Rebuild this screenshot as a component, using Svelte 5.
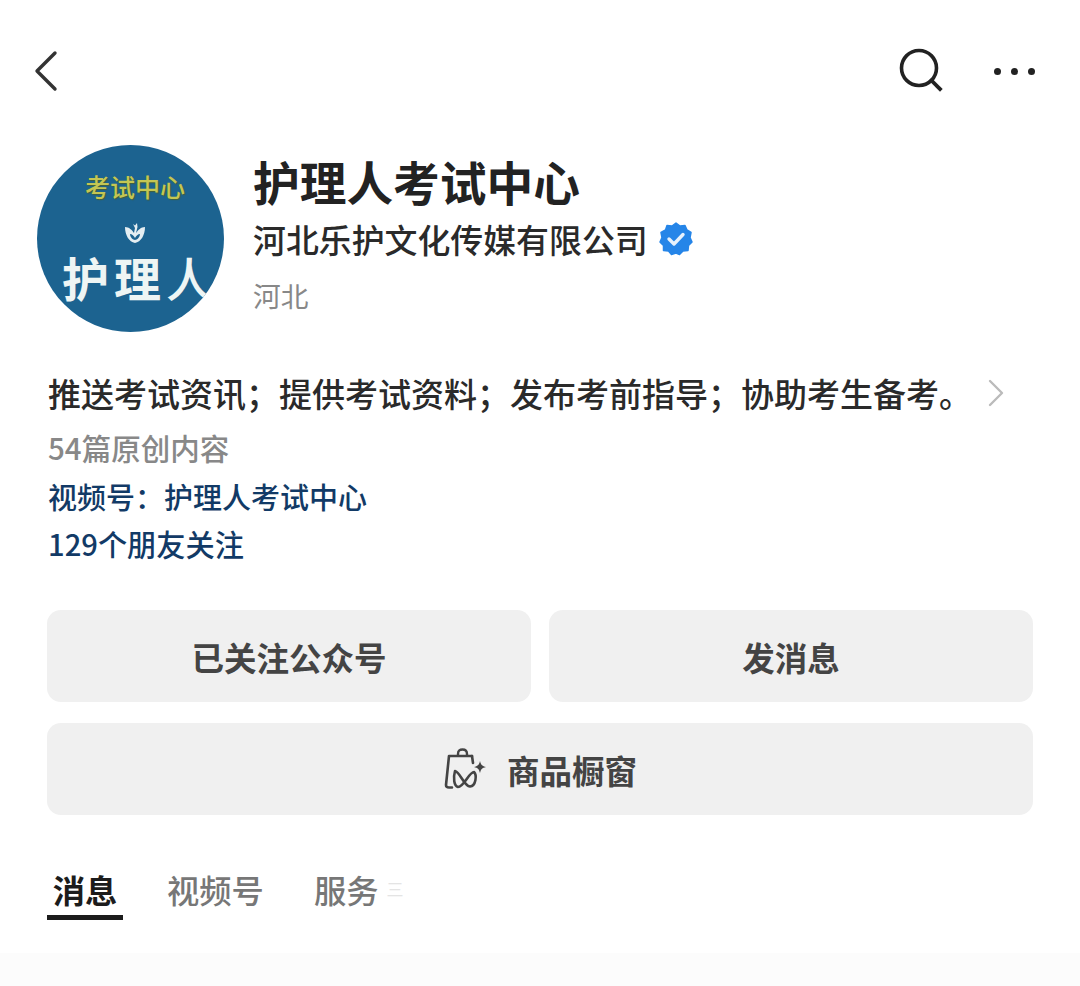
<script lang="ts">
  const tabs = [
    { label: '消息', active: true },
    { label: '视频号', active: false },
    { label: '服务', active: false }
  ];
</script>

<section class="page">
  <header class="nav">
    <svg class="back" width="26" height="42" viewBox="0 0 26 42" fill="none">
      <path d="M22 3 L4 21 L22 39" stroke="#333" stroke-width="3.4" stroke-linecap="round" stroke-linejoin="round" />
    </svg>
    <div class="nav-right">
      <svg width="46" height="46" viewBox="0 0 46 46" fill="none">
        <circle cx="21" cy="20" r="17.5" stroke="#222" stroke-width="3.6" />
        <path d="M33.5 32.5 L42 41" stroke="#222" stroke-width="3.8" stroke-linecap="square" />
      </svg>
      <div class="dots"><i></i><i></i><i></i></div>
    </div>
  </header>

  <div class="profile">
    <div class="avatar">
      <span class="av-top">考试中心</span>
      <svg class="av-mark" width="22" height="22" viewBox="0 0 22 22">
        <path d="M1 5 C5 5 8 8 10 11 L11 6 L9 2 L11 3.5 L13 1 L13.5 5 L12 11 C14 8 17 5 21 5 C21 13 17 20 11 21 C5 20 1 13 1 5 Z" fill="#e4eef2" />
        <path d="M6 12 C8 12 10 14 11 16 C12 14 14 12 16 12 C16 15 13 18 11 18 C9 18 6 15 6 12 Z" fill="#1c6390" />
      </svg>
      <span class="av-main">护理<em>人</em></span>
    </div>
    <div class="names">
      <h1>护理人考试中心</h1>
      <div class="company">
        河北乐护文化传媒有限公司
        <svg width="34" height="34" viewBox="0 0 34 34">
          <path d="M17 1 L21 4 L26 3.5 L28 8 L32 10.5 L31 15.5 L33 20 L29.5 23.5 L29 28.5 L24 29 L20.5 32.5 L17 31 L12.5 32.5 L9.5 29 L4.5 28.5 L4.5 23.5 L1 20 L3 15.5 L2 10.5 L6.5 8 L8 3.5 L13 4 Z" fill="#2585e8" stroke="#2585e8" stroke-width="1.5" stroke-linejoin="round" />
          <path d="M10 17 L15 22 L24 12.5" fill="none" stroke="#e6f1fc" stroke-width="3.4" stroke-linecap="round" stroke-linejoin="round" />
        </svg>
      </div>
      <div class="region">河北</div>
    </div>
  </div>

  <div class="intro">
    <p class="desc">
      <span>推送考试资讯；提供考试资料；发布考前指导；协助考生备考。</span>
      <svg width="16" height="28" viewBox="0 0 16 28" fill="none">
        <path d="M2 2 L14 14 L2 26" stroke="#bbb" stroke-width="2.4" stroke-linecap="round" stroke-linejoin="round" />
      </svg>
    </p>
    <p class="count">54篇原创内容</p>
    <p class="link channel">视频号：护理人考试中心</p>
    <p class="link friends">129个朋友关注</p>
  </div>

  <div class="actions">
    <button>已关注公众号</button>
    <button>发消息</button>
    <button class="wide">
      <svg width="44" height="42" viewBox="0 0 44 42" fill="none">
        <path d="M15 8 V6 C15 2.5 17 1.5 19.5 1.5 C22 1.5 24 2.5 24 6 V8" stroke="#444" stroke-width="2.4" />
        <path d="M29 8 H6 L3 37 C3 39 4 39.5 6 39.5 H9" stroke="#444" stroke-width="2.6" stroke-linecap="round" stroke-linejoin="round" />
        <path d="M29 8 L30 15" stroke="#444" stroke-width="2.6" stroke-linecap="round" />
        <path d="M12 23 C17 24 21 38 27 38.5 C33 38 34 27 31 24 C26 24 21 39 15 39 C11 38 10 30 12 23 Z" stroke="#444" stroke-width="2.6" stroke-linejoin="round" />
        <path d="M37 13 C38 17 39 18 43 19 C39 20 38 21 37 25 C36 21 35 20 31 19 C35 18 36 17 37 13 Z" fill="#444" />
      </svg>
      商品橱窗
    </button>
  </div>

  <nav class="tabs">
    {#each tabs as tab}
      <span class="tab" class:active={tab.active}>{tab.label}</span>
    {/each}
    <span class="more">三</span>
  </nav>

  <div class="foot"></div>
</section>

<style>
  :global(body) {
    background: #fff;
    font-family: "Noto Sans CJK SC", "Noto Sans", sans-serif;
  }

  .page {
    width: 1080px;
    height: 986px;
    overflow: hidden;
    display: flex;
    flex-direction: column;
    color: #222;
  }

  .nav {
    display: flex;
    justify-content: space-between;
    align-items: center;
    height: 46px;
    margin-top: 48px;
    padding: 0 45px 0 33px;
  }

  .nav-right {
    display: flex;
    align-items: center;
    gap: 50px;
  }

  .dots {
    display: flex;
    gap: 10px;
  }

  .dots i {
    width: 7px;
    height: 7px;
    border-radius: 50%;
    background: #222;
  }

  .profile {
    display: flex;
    gap: 29px;
    margin-top: 51px;
    padding-left: 37px;
  }

  .avatar {
    width: 187px;
    height: 187px;
    flex: none;
    border-radius: 50%;
    overflow: hidden;
    background: #1c6390;
    display: flex;
    flex-direction: column;
    align-items: flex-start;
  }

  .av-top {
    margin: 23px 0 0 48px;
    font-size: 25px;
    line-height: 36px;
    font-weight: 500;
    color: #c4c653;
    text-shadow: 1px 1px 1px #44603a;
    white-space: nowrap;
  }

  .av-mark {
    margin: 18px 0 0 87px;
  }

  .av-main {
    margin: 2px 0 0 25px;
    font-size: 47px;
    line-height: 62px;
    font-weight: 700;
    color: #eef5f4;
    white-space: nowrap;
    letter-spacing: 5px;
  }

  .av-main em {
    font-style: normal;
    font-weight: 500;
    letter-spacing: 0;
  }

  .names {
    padding-top: 8px;
  }

  h1 {
    margin: 0;
    font-size: 46.7px;
    line-height: 56px;
    font-weight: 700;
    color: #222;
    white-space: nowrap;
  }

  .company {
    display: flex;
    align-items: center;
    gap: 11px;
    margin-top: 3px;
    font-size: 32.9px;
    line-height: 54px;
    font-weight: 500;
    color: #2a2a2a;
    white-space: nowrap;
  }

  .region {
    margin-top: 6px;
    font-size: 27.7px;
    line-height: 46px;
    color: #888;
  }

  .intro {
    padding-left: 48px;
    margin-top: 35px;
  }

  .intro p {
    margin: 0;
    white-space: nowrap;
  }

  .desc {
    display: flex;
    align-items: center;
    gap: 16px;
    font-size: 33px;
    line-height: 52px;
    font-weight: 500;
    color: #2a2a2a;
  }

  .count {
    margin-top: 5px !important;
    font-size: 29.5px;
    line-height: 46px;
    font-weight: 500;
    color: #888;
  }

  .link {
    font-size: 29px;
    line-height: 48px;
    font-weight: 500;
    color: #123a66;
  }

  .channel {
    margin-top: 2px !important;
  }

  .friends {
    margin-top: -1px !important;
    font-size: 29.2px;
  }

  .actions {
    display: grid;
    grid-template-columns: 484px 484px;
    gap: 21px 18px;
    margin-top: 43px;
    padding-left: 47px;
  }

  button {
    height: 92px;
    border: none;
    border-radius: 14px;
    background: #f0f0f0;
    font-family: inherit;
    font-size: 32.5px;
    font-weight: 700;
    color: #444;
    display: flex;
    align-items: center;
    justify-content: center;
    gap: 20px;
    padding: 0;
  }

  .wide {
    grid-column: 1 / 3;
  }

  .tabs {
    display: flex;
    align-items: flex-start;
    gap: 44px;
    margin-top: 50px;
    padding-left: 47px;
  }

  .tab {
    font-size: 32.3px;
    line-height: 48px;
    font-weight: 500;
    color: #777;
    white-space: nowrap;
  }

  .tab:nth-child(3) {
    margin-left: 6px;
  }

  .tab.active {
    width: 76px;
    text-align: center;
    font-weight: 700;
    color: #1c1c1c;
    padding-bottom: 2px;
    border-bottom: 5px solid #1c1c1c;
  }

  .more {
    margin-left: -36px;
    font-size: 17px;
    line-height: 48px;
    color: #e4e4e4;
  }

  .foot {
    flex: 1;
    margin-top: 33px;
    background: #fcfcfc;
  }
</style>
